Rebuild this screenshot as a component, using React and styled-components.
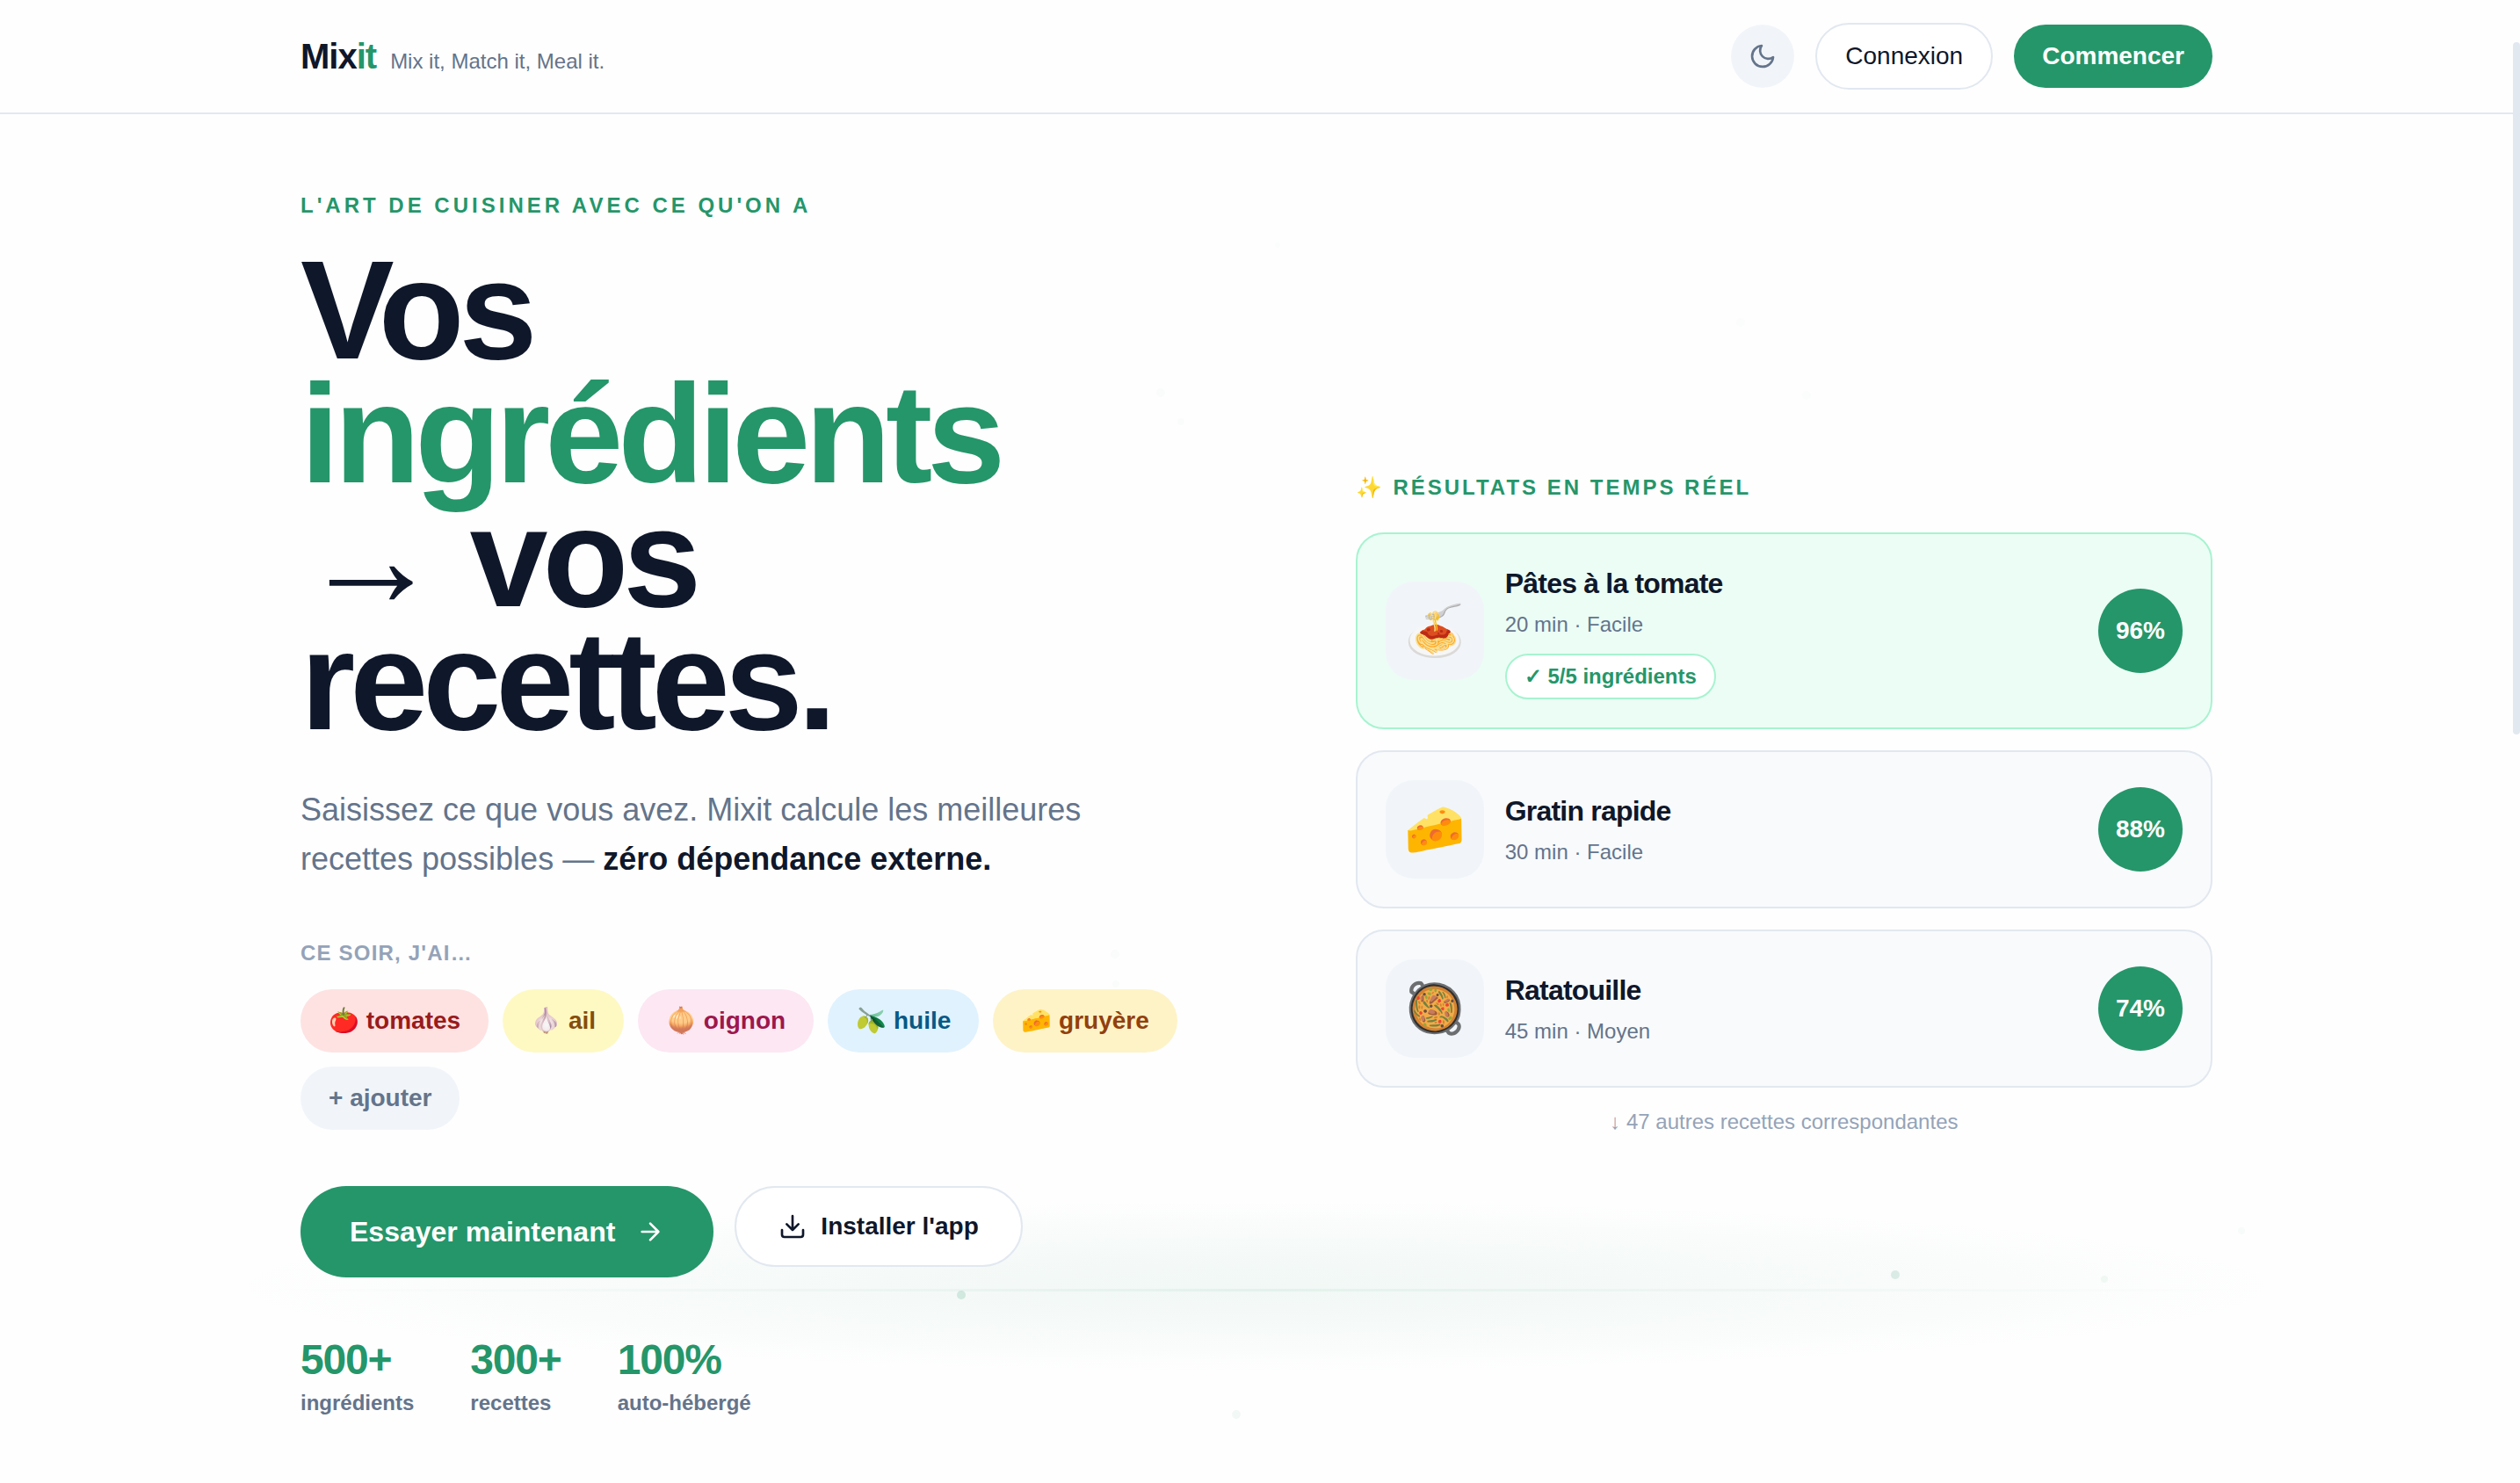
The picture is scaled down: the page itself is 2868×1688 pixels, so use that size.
import React from "react";
import styled, { createGlobalStyle, ThemeProvider } from "styled-components";

const theme = {
  green: "#25966a",
  ink: "#0f172a",
  slate: "#64748b",
  muted: "#94a3b8",
  line: "#e2e8f0",
  soft: "#f1f5f9",
  page: "#fefefe",
};

const GlobalStyle = createGlobalStyle`
  * {
    box-sizing: border-box;
  }
  body {
    margin: 0;
    background: ${theme.page};
    color: ${theme.ink};
    font-family: "Liberation Sans", Arial, sans-serif;
    font-size: 24px;
    line-height: 38px;
  }
  h1, h2, h3, p, ul, ol, dl, dd {
    margin: 0;
    padding: 0;
  }
  button {
    font-family: inherit;
    cursor: pointer;
  }
`;

const Page = styled.div`
  position: relative;
  padding-right: 8px;
  min-height: 100vh;
  overflow: hidden;
`;

const ScrollThumb = styled.div`
  position: absolute;
  top: 48px;
  right: 0;
  z-index: 2;
  width: 8px;
  height: 788px;
  border-radius: 4px;
  background: ${({ theme }) => theme.line};
`;

const Header = styled.header`
  margin-right: -8px;
  padding-right: 8px;
  border-bottom: 2px solid ${({ theme }) => theme.line};
`;

const Container = styled.div`
  max-width: 2304px;
  margin: 0 auto;
  padding: 0 64px;
`;

const HeaderInner = styled(Container)`
  display: flex;
  align-items: center;
  justify-content: space-between;
  min-height: 128px;
`;

const Brand = styled.a`
  display: flex;
  align-items: baseline;
  gap: 16px;
  color: inherit;
  text-decoration: none;
`;

const Logo = styled.span`
  font-size: 40px;
  font-weight: 700;
  line-height: 60px;
  letter-spacing: -0.025em;
`;

const Accent = styled.span`
  color: ${({ theme }) => theme.green};
`;

const Tagline = styled.span`
  color: ${({ theme }) => theme.slate};
`;

const Nav = styled.nav`
  display: flex;
  align-items: center;
  gap: 24px;
`;

const ThemeToggle = styled.button`
  display: grid;
  place-items: center;
  width: 72px;
  height: 72px;
  padding: 0;
  border: 0;
  border-radius: 50%;
  background: ${({ theme }) => theme.soft};
  color: ${({ theme }) => theme.slate};
`;

const NavButton = styled.button`
  padding: 18px 32px;
  border: ${({ $primary, theme }) =>
    $primary ? "0" : `2px solid ${theme.line}`};
  border-radius: 999px;
  background: ${({ $primary, theme }) => ($primary ? theme.green : "#fff")};
  color: ${({ $primary, theme }) => ($primary ? "#fff" : theme.ink)};
  font-size: 28px;
  font-weight: ${({ $primary }) => ($primary ? 700 : 400)};
  line-height: 36px;
`;

const Hero = styled.main`
  position: relative;
`;

const Backdrop = styled.svg`
  position: absolute;
  top: 0;
  left: 0;
  width: 100%;
  height: 1558px;
  pointer-events: none;
`;

const HeroGrid = styled(Container)`
  position: relative;
  display: grid;
  grid-template-columns: 1.1fr 1fr;
  align-items: center;
  gap: 128px;
  padding-top: 85px;
  padding-bottom: 72px;
`;

const Eyebrow = styled.p`
  margin-bottom: 30px;
  color: ${({ theme }) => theme.green};
  font-weight: 700;
  letter-spacing: 4px;
  text-transform: uppercase;
`;

const Title = styled.h1`
  margin-bottom: 48px;
  font-size: 160px;
  font-weight: 700;
  line-height: 0.88;
  letter-spacing: -6px;
`;

const Lead = styled.p`
  max-width: 960px;
  margin-bottom: 60px;
  color: ${({ theme }) => theme.slate};
  font-size: 36px;
  line-height: 56px;

  strong {
    color: ${({ theme }) => theme.ink};
  }
`;

const PantryLabel = styled.p`
  margin-bottom: 22px;
  color: ${({ theme }) => theme.muted};
  font-weight: 700;
  letter-spacing: 0.05em;
  text-transform: uppercase;
`;

const Chips = styled.div`
  display: flex;
  flex-wrap: wrap;
  gap: 16px;
  margin-bottom: 64px;
`;

const Chip = styled.button`
  padding: 18px 32px;
  border: 0;
  border-radius: 999px;
  background: ${({ $bg }) => $bg};
  color: ${({ $color }) => $color};
  font-size: 28px;
  font-weight: 700;
  line-height: 36px;
`;

const Actions = styled.div`
  display: flex;
  align-items: flex-start;
  gap: 24px;
  margin-bottom: 64px;
`;

const PrimaryAction = styled.button`
  display: flex;
  align-items: center;
  gap: 24px;
  padding: 36px 56px;
  border: 0;
  border-radius: 999px;
  background: ${({ theme }) => theme.green};
  color: #fff;
  font-size: 32px;
  font-weight: 700;
  line-height: 32px;
`;

const SecondaryAction = styled.button`
  display: flex;
  align-items: center;
  gap: 16px;
  padding: 28px 48px;
  border: 2px solid ${({ theme }) => theme.line};
  border-radius: 999px;
  background: #fff;
  color: ${({ theme }) => theme.ink};
  font-size: 28px;
  font-weight: 700;
  line-height: 32px;
`;

const Stats = styled.dl`
  display: flex;
  gap: 64px;
`;

const Stat = styled.div`
  display: flex;
  flex-direction: column-reverse;
`;

const StatLabel = styled.dt`
  color: ${({ theme }) => theme.slate};
  font-weight: 700;
`;

const StatValue = styled.dd`
  color: ${({ theme }) => theme.green};
  font-size: 48px;
  font-weight: 700;
  line-height: 60px;
  letter-spacing: -0.025em;
`;

const ResultsTitle = styled.h2`
  margin-bottom: 32px;
  color: ${({ theme }) => theme.green};
  font-size: 24px;
  font-weight: 700;
  letter-spacing: 3px;
  text-transform: uppercase;
`;

const ResultList = styled.ul`
  display: grid;
  gap: 24px;
  list-style: none;
`;

const ResultCard = styled.li`
  display: flex;
  align-items: center;
  gap: 24px;
  padding: 32px;
  border: 2px solid ${({ $best, theme }) => ($best ? "#a7f3d0" : theme.line)};
  border-radius: 32px;
  background: ${({ $best }) => ($best ? "#ecfdf5" : "#f8fafc")};
`;

const Tile = styled.span`
  display: grid;
  place-items: center;
  flex: none;
  width: 112px;
  height: 112px;
  border-radius: 32px;
  background: ${({ theme }) => theme.soft};
  font-size: 56px;
`;

const ResultBody = styled.div`
  display: flex;
  flex: 1;
  flex-direction: column;
  align-items: flex-start;
`;

const ResultName = styled.h3`
  margin-bottom: 4px;
  font-size: 32px;
  font-weight: 700;
  line-height: 48px;
  letter-spacing: -0.025em;
`;

const ResultMeta = styled.p`
  color: ${({ theme }) => theme.slate};
`;

const Badge = styled.span`
  margin-top: 14px;
  padding: 8px 20px;
  border: 2px solid #a7f3d0;
  border-radius: 999px;
  background: #fff;
  color: ${({ theme }) => theme.green};
  font-weight: 700;
  line-height: 32px;
`;

const Score = styled.span`
  display: grid;
  place-items: center;
  flex: none;
  width: 96px;
  height: 96px;
  border-radius: 50%;
  background: ${({ theme }) => theme.green};
  color: #fff;
  font-size: 28px;
  font-weight: 700;
`;

const MoreResults = styled.p`
  margin-top: 20px;
  color: ${({ theme }) => theme.muted};
  text-align: center;
`;

const ingredients = [
  { name: "🍅 tomates", bg: "#fee2e2", color: "#991b1b" },
  { name: "🧄 ail", bg: "#fef9c3", color: "#854d0e" },
  { name: "🧅 oignon", bg: "#fce7f3", color: "#9d174d" },
  { name: "🫒 huile", bg: "#e0f2fe", color: "#075985" },
  { name: "🧀 gruyère", bg: "#fef3c7", color: "#92400e" },
  { name: "+ ajouter", bg: "#f1f5f9", color: "#64748b" },
];

const recipes = [
  {
    icon: "🍝",
    name: "Pâtes à la tomate",
    meta: "20 min · Facile",
    badge: "✓ 5/5 ingrédients",
    score: "96%",
  },
  { icon: "🧀", name: "Gratin rapide", meta: "30 min · Facile", score: "88%" },
  { icon: "🥘", name: "Ratatouille", meta: "45 min · Moyen", score: "74%" },
];

const stats = [
  { value: "500+", label: "ingrédients" },
  { value: "300+", label: "recettes" },
  { value: "100%", label: "auto-hébergé" },
];

// x, y, radius, opacity
const particles = [
  [1094, 1344, 5, 0.17],
  [2157, 1321, 5, 0.15],
  [2395, 1326, 4, 0.05],
  [2551, 1271, 4, 0.03],
  [1407, 1480, 5, 0.06],
  [1269, 956, 5, 0.025],
  [1270, 990, 4, 0.025],
  [1321, 317, 5, 0.02],
  [1344, 350, 4, 0.02],
  [1981, 237, 5, 0.015],
  [2056, 320, 5, 0.015],
  [1454, 149, 3, 0.015],
];

const iconProps = {
  width: 32,
  height: 32,
  viewBox: "0 0 24 24",
  fill: "none",
  stroke: "currentColor",
  strokeWidth: 2,
  strokeLinecap: "round",
  strokeLinejoin: "round",
  "aria-hidden": true,
};

const MoonIcon = () => (
  <svg {...iconProps}>
    <path d="M21 12.79A9 9 0 1 1 11.21 3 7 7 0 0 0 21 12.79z" />
  </svg>
);

const ArrowIcon = () => (
  <svg {...iconProps}>
    <path d="M5 12h14M12 5l7 7-7 7" />
  </svg>
);

const DownloadIcon = () => (
  <svg {...iconProps}>
    <path d="M21 15v4a2 2 0 0 1-2 2H5a2 2 0 0 1-2-2v-4M7 10l5 5 5-5M12 15V3" />
  </svg>
);

const HeroBackdrop = () => (
  <Backdrop
    viewBox="0 0 2860 1558"
    preserveAspectRatio="xMidYMin slice"
    aria-hidden="true"
  >
    <defs>
      <radialGradient id="glow">
        <stop offset="0" stopColor="#25966a" stopOpacity="0.06" />
        <stop offset="0.5" stopColor="#25966a" stopOpacity="0.035" />
        <stop offset="1" stopColor="#25966a" stopOpacity="0" />
      </radialGradient>
      <linearGradient id="horizon">
        <stop offset="0" stopColor="#25966a" stopOpacity="0" />
        <stop offset="0.5" stopColor="#25966a" stopOpacity="0.07" />
        <stop offset="1" stopColor="#25966a" stopOpacity="0" />
      </linearGradient>
    </defs>
    <ellipse cx="1430" cy="1334" rx="1180" ry="98" fill="url(#glow)" />
    <rect x="286" y="1337" width="2288" height="3" fill="url(#horizon)" />
    {particles.map(([x, y, r, opacity]) => (
      <circle
        key={`${x}-${y}`}
        cx={x}
        cy={y}
        r={r}
        fill="#25966a"
        fillOpacity={opacity}
      />
    ))}
  </Backdrop>
);

export default function App() {
  return (
    <ThemeProvider theme={theme}>
      <GlobalStyle />
      <Page>
        <ScrollThumb />
        <Header>
          <HeaderInner>
            <Brand href="#">
              <Logo>
                Mix<Accent>it</Accent>
              </Logo>
              <Tagline>Mix it, Match it, Meal it.</Tagline>
            </Brand>
            <Nav>
              <ThemeToggle aria-label="Mode sombre">
                <MoonIcon />
              </ThemeToggle>
              <NavButton>Connexion</NavButton>
              <NavButton $primary>Commencer</NavButton>
            </Nav>
          </HeaderInner>
        </Header>
        <Hero>
          <HeroBackdrop />
          <HeroGrid>
            <section>
              <Eyebrow>L'art de cuisiner avec ce qu'on a</Eyebrow>
              <Title>
                Vos
                <br />
                <Accent>ingrédients</Accent>
                <br />→ vos recettes.
              </Title>
              <Lead>
                Saisissez ce que vous avez. Mixit calcule les meilleures
                recettes possibles — <strong>zéro dépendance externe.</strong>
              </Lead>
              <PantryLabel>Ce soir, j'ai…</PantryLabel>
              <Chips>
                {ingredients.map(({ name, bg, color }) => (
                  <Chip key={name} $bg={bg} $color={color}>
                    {name}
                  </Chip>
                ))}
              </Chips>
              <Actions>
                <PrimaryAction>
                  Essayer maintenant
                  <ArrowIcon />
                </PrimaryAction>
                <SecondaryAction>
                  <DownloadIcon />
                  Installer l'app
                </SecondaryAction>
              </Actions>
              <Stats>
                {stats.map(({ value, label }) => (
                  <Stat key={label}>
                    <StatLabel>{label}</StatLabel>
                    <StatValue>{value}</StatValue>
                  </Stat>
                ))}
              </Stats>
            </section>
            <section>
              <ResultsTitle>✨ Résultats en temps réel</ResultsTitle>
              <ResultList>
                {recipes.map(({ icon, name, meta, badge, score }) => (
                  <ResultCard key={name} $best={Boolean(badge)}>
                    <Tile>{icon}</Tile>
                    <ResultBody>
                      <ResultName>{name}</ResultName>
                      <ResultMeta>{meta}</ResultMeta>
                      {badge && <Badge>{badge}</Badge>}
                    </ResultBody>
                    <Score>{score}</Score>
                  </ResultCard>
                ))}
              </ResultList>
              <MoreResults>↓ 47 autres recettes correspondantes</MoreResults>
            </section>
          </HeroGrid>
        </Hero>
      </Page>
    </ThemeProvider>
  );
}
